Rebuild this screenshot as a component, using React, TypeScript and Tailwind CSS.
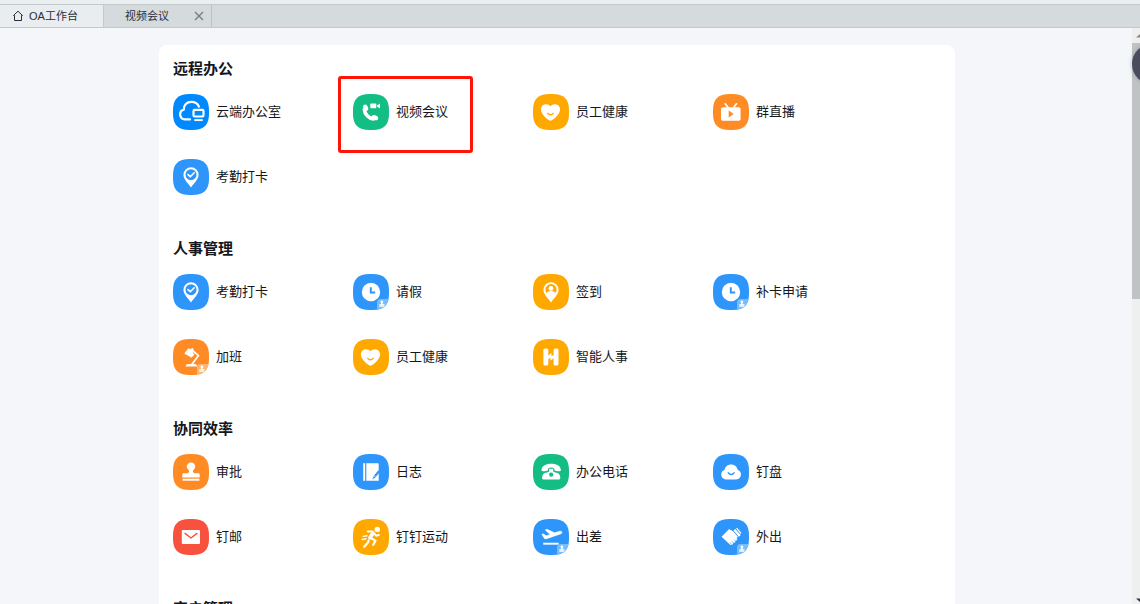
import React from "react";

type Glyph = { color: string; badge?: boolean; art: React.ReactNode };

const BLUE = "#2e96fb";
const AMBER = "#ffa800";
const ORANGE = "#ff8b25";
const GREEN = "#13bd84";
const RED = "#f8513d";

const stroke = {
  fill: "none",
  strokeLinecap: "round" as const,
  strokeLinejoin: "round" as const,
};

const pin =
  "M18 8.2a7.6 7.6 0 0 0-7.6 7.6c0 4.6 4.6 8.2 7.6 12.6 3-4.4 7.6-8 7.6-12.6A7.6 7.6 0 0 0 18 8.2z";

const GLYPHS: Record<string, Glyph> = {
  cloudOffice: {
    color: "#0089ff",
    art: (
      <>
        <path
          {...stroke}
          stroke="#fff"
          strokeWidth="2.2"
          d="M17 25.4h-5.2a5 5 0 0 1-1-9.8C10.500 11 14 7.800 18.300 7.800c3.600 0 6.500 1.800 7.600 4.800"
        />
        <rect x="20.500" y="15.900" width="10" height="6.600" rx="1.200" fill="none" stroke="#fff" strokeWidth="2.200" />
        <path d="M21.300 26.100h8.400" stroke="#fff" strokeWidth="1.900" />
      </>
    ),
  },
  video: {
    color: GREEN,
    art: (
      <>
        <path {...stroke} stroke="#fff" strokeWidth="3.6" d="M11.300 15.500c.4 4.600 4.300 8.800 9.200 9.400" />
        <ellipse cx="12.700" cy="13.700" rx="2.300" ry="3.300" fill="#fff" transform="rotate(-25 12.700 13.700)" />
        <ellipse cx="21.900" cy="23.700" rx="3.400" ry="2.300" fill="#fff" transform="rotate(25 21.900 23.700)" />
        <rect x="17.300" y="9.400" width="6" height="4.900" rx=".8" fill="#fff" />
        <path d="M24 11.400l3-2v5l-3-2z" fill="#fff" />
      </>
    ),
  },
  heart: {
    color: AMBER,
    art: (
      <>
        <path
          fill="#fff"
          d="M17.500 26.800c-1.200 0-9.600-5.600-9.600-11.200 0-3.200 2.300-5.400 5.100-5.400 1.900 0 3.500.7 4.500 2 1-1.300 2.600-2 4.500-2 2.800 0 5.100 2.200 5.100 5.400 0 5.600-8.400 11.200-9.600 11.200z"
        />
        <path {...stroke} stroke={AMBER} strokeWidth="1.4" d="M14.800 19.300c1.400 2 4 2 5.400 0" />
      </>
    ),
  },
  live: {
    color: ORANGE,
    art: (
      <>
        <rect x="8" y="13.200" width="19.600" height="13.600" rx="1.800" fill="#fff" />
        <path {...stroke} stroke="#fff" strokeWidth="1.7" d="M12.200 9.800l2.900 3.700M23.500 9.800l-2.900 3.700" />
        <path d="M15.700 16.500l5 3.500-5 3.500z" fill={ORANGE} />
      </>
    ),
  },
  pinCheck: {
    color: BLUE,
    art: (
      <>
        <path d={pin} fill="#fff" />
        <circle cx="18" cy="15.700" r="5.500" fill={BLUE} />
        <path {...stroke} stroke="#fff" strokeWidth="1.6" d="M15 15.600l2.300 2.100 3.900-3.900" />
      </>
    ),
  },
  clock: {
    color: BLUE,
    badge: true,
    art: (
      <>
        <circle cx="18" cy="18" r="9.200" fill="#fff" />
        <path d="M17.800 13.300v5.200h4.400" stroke={BLUE} strokeWidth="1.9" fill="none" />
      </>
    ),
  },
  pinPerson: {
    color: AMBER,
    art: (
      <>
        <path d={pin} fill="#fff" />
        <circle cx="18" cy="15.700" r="5.600" fill={AMBER} />
        <circle cx="18" cy="14.400" r="2.400" fill="#fff" />
        <path d="M13.300 19.700c.8-2 2.500-2.600 4.700-2.600s3.900.6 4.700 2.600l-4.700 3z" fill="#fff" />
      </>
    ),
  },
  lamp: {
    color: ORANGE,
    badge: true,
    art: (
      <>
        <path d="M11.300 14.400l4.100-5.200 2.100.8 2.200-1.100 1.300 2.400-1.300 1.800 1.600 2.600-3 3-2.600-1.700z" fill="#fff" />
        <path {...stroke} stroke="#fff" strokeWidth="1.7" d="M20.500 12.300l5 4.300-6.500 8.600" />
        <path d="M12.600 27.500c.2-1.700 1.300-2.500 2.900-2.500h5.800c1.700 0 2.800.8 3 2.500z" fill="#fff" />
      </>
    ),
  },
  hr: {
    color: AMBER,
    art: (
      <>
        <rect x="10.400" y="9.600" width="4.900" height="17" rx="1.700" fill="#fff" />
        <rect x="20.600" y="9.600" width="4.900" height="17" rx="1.700" fill="#fff" />
        <path d="M14.500 20.600v-3.500l4-3.200v3.400l3-1.700v3.200l-4 2.600v-2.700z" fill="#fff" />
      </>
    ),
  },
  stamp: {
    color: ORANGE,
    art: (
      <>
        <circle cx="18" cy="12.600" r="4.200" fill="#fff" />
        <path
          fill="#fff"
          d="M16 14.500h4v2.700c0 1.500.8 2.100 2.200 2.100h3.100c.8 0 1.400.6 1.400 1.400v2.800H9.300v-2.800c0-.8.600-1.400 1.400-1.400h3.100c1.400 0 2.200-.6 2.200-2.100z"
        />
        <path d="M9.600 25.700h16.800" stroke="#fff" strokeWidth="2" />
      </>
    ),
  },
  journal: {
    color: BLUE,
    art: (
      <>
        <path d="M11.200 9.200v17.600" stroke="#fff" strokeWidth="1.9" />
        <path d="M13.300 9.200h11.200c.7 0 1.200.5 1.200 1.200v16.400H13.300z" fill="#fff" />
        <path d="M26.200 17l-4.300 5.200" stroke={BLUE} strokeWidth="2.2" />
        <path d="M20.900 21.900l1.800 1.500-3.600 1.900z" fill={BLUE} />
      </>
    ),
  },
  phone: {
    color: GREEN,
    art: (
      <>
        <path
          fill="#fff"
          d="M8.500 16.800c-.4-4.600 4.200-7 9.700-7s10.100 2.400 9.700 7c-1.900.8-4.200.7-6.400-.2.200-2-.6-3.100-3.300-3.100s-3.500 1.100-3.300 3.100c-2.200.9-4.500 1-6.400.2z"
        />
        <path
          fill="#fff"
          d="M16.200 14.800h4v2c0 1 1 1.600 2.300 1.800 3.200.4 4.800 2.200 4.800 5.100 0 1.100-.6 1.800-1.700 1.800H10.800c-1.100 0-1.700-.7-1.700-1.800 0-2.900 1.600-4.700 4.800-5.100 1.300-.2 2.300-.8 2.300-1.800z"
        />
        <circle cx="18.200" cy="20.700" r="2.100" fill={GREEN} />
      </>
    ),
  },
  cloud: {
    color: BLUE,
    art: (
      <>
        <path
          fill="#fff"
          d="M13 25.400a4.900 4.900 0 0 1-1.500-9.500c.6-3.300 3.200-5.500 6.600-5.500s6 2.200 6.600 5.500a4.900 4.900 0 0 1-1.500 9.500z"
        />
        <path {...stroke} stroke={BLUE} strokeWidth="1.6" d="M15.300 18.900c1.500 2.200 4.200 2.200 5.700 0" />
      </>
    ),
  },
  mail: {
    color: RED,
    art: (
      <>
        <rect x="8.800" y="11" width="18.200" height="14" rx="1" fill="#fff" />
        <path {...stroke} stroke={RED} strokeWidth="1.4" d="M12 14.400l6 4.600 6-4.600" />
      </>
    ),
  },
  run: {
    color: AMBER,
    art: (
      <>
        <circle cx="24.300" cy="10.400" r="2.700" fill="#fff" />
        <g {...stroke} stroke="#fff">
          <path strokeWidth="2" d="M14.800 12.400h4.700l3.600 4.300 2.700-.7" />
          <path strokeWidth="3.600" d="M20 14.400l-3.200 4.400" />
          <path strokeWidth="2.200" d="M17.200 18.700l5.300 2.900-2.300 4.200M15.700 21.700l-1.200 2.300-3.300 3.700" />
          <path strokeWidth="1.4" d="M10.300 17.400l3.700-.6M9.200 20.500l3.900-.7" />
        </g>
      </>
    ),
  },
  plane: {
    color: BLUE,
    badge: true,
    art: (
      <>
        <path d="M10.200 24.700h15.500" stroke="#fff" strokeWidth="1.9" />
        <path
          fill="#fff"
          d="M8.800 15.300l1.700-.4 2.600 1.900 4-1.300-4.900-4.600 1.900-.6 7.400 3.500 5.300-1.500c1-.3 1.900.1 2.100.8.200.8-.4 1.500-1.300 1.800L13 19.900c-.8.200-1.400 0-1.800-.7z"
          stroke="#fff"
          strokeWidth=".5"
        />
      </>
    ),
  },
  hand: {
    color: BLUE,
    badge: true,
    art: (
      <>
        <path d="M8.600 17.800l7.500-7.700c1.300 1.300 2.800 1.200 4.100 2.500l4.800 5.200-1.500 1.500 1 1.200-1.800 1.400-.4 1.400-1.900.6-.7 1.500-2.300.6z" fill="#fff" />
        <path d="M20.400 11.600l1.900-1.600 5.400 6-1.700 1.700zM23.100 9.600l1-.8 4.200 4.900-.5 1.200z" fill="#fff" />
        <path {...stroke} stroke={BLUE} strokeWidth=".7" d="M21.300 21l1.700 1.800M19.100 22.500l1.600 1.700M17 23.700l1.500 1.500" />
      </>
    ),
  },
};

const SQUIRCLE =
  "M0 16.500C0 5 5 0 16.500 0h3C31 0 36 5 36 16.500v3C36 31 31 36 19.500 36h-3C5 36 0 31 0 19.500z";
const CORNER = "M24 36v-7.500c0-2.300 1.200-3.500 3.500-3.500H36v11z";

function AppIcon({ name }: { name: string }) {
  const { color, badge, art } = GLYPHS[name];
  const clip = React.useId();
  return (
    <svg viewBox="0 0 36 36" className="size-9 shrink-0" aria-hidden="true">
      <clipPath id={clip}>
        <path d={SQUIRCLE} />
      </clipPath>
      <path d={SQUIRCLE} fill={color} />
      {art}
      {badge && (
        <g clipPath={`url(#${clip})`}>
          <path d={CORNER} fill={color} />
          <path d={CORNER} fill="#fff" opacity=".36" />
          <circle cx="28.900" cy="27.800" r="1.400" fill="#fff" />
          <path d="M28.300 28.500h1.200l.3 1.700h1.700v1.500h-5.200v-1.500H28zM26.300 32.200h5.200v.8h-5.200z" fill="#fff" />
        </g>
      )}
    </svg>
  );
}

type Item = { label: string; icon: string; marked?: boolean };

const SECTIONS: { title: string; items: Item[] }[] = [
  {
    title: "远程办公",
    items: [
      { label: "云端办公室", icon: "cloudOffice" },
      { label: "视频会议", icon: "video", marked: true },
      { label: "员工健康", icon: "heart" },
      { label: "群直播", icon: "live" },
      { label: "考勤打卡", icon: "pinCheck" },
    ],
  },
  {
    title: "人事管理",
    items: [
      { label: "考勤打卡", icon: "pinCheck" },
      { label: "请假", icon: "clock" },
      { label: "签到", icon: "pinPerson" },
      { label: "补卡申请", icon: "clock" },
      { label: "加班", icon: "lamp" },
      { label: "员工健康", icon: "heart" },
      { label: "智能人事", icon: "hr" },
    ],
  },
  {
    title: "协同效率",
    items: [
      { label: "审批", icon: "stamp" },
      { label: "日志", icon: "journal" },
      { label: "办公电话", icon: "phone" },
      { label: "钉盘", icon: "cloud" },
      { label: "钉邮", icon: "mail" },
      { label: "钉钉运动", icon: "run" },
      { label: "出差", icon: "plane" },
      { label: "外出", icon: "hand" },
    ],
  },
  { title: "客户管理", items: [] },
];

function TabBar() {
  return (
    <header className="shrink-0 bg-[#e9eef0] pt-1">
      <nav className="flex h-6 border-y border-[#c3c8cb] bg-[#d5dadd] text-[11px] text-[#2b2f36]">
        <button className="flex items-center gap-[5px] border-r border-[#c3c8cb] bg-[#e9edf0] pr-[25px] pl-3">
          <svg viewBox="0 0 12 12" className="size-3" fill="none" stroke="#2b2f36" aria-hidden="true">
            <path d="M2.500 10.500V5.500H1.500L6 1.200l4.500 4.300h-1v5z" strokeLinejoin="round" />
          </svg>
          OA工作台
        </button>
        <div className="flex items-center border-r border-[#bcc2c5] pr-1.5 pl-[21px]">
          <button className="mr-6">视频会议</button>
          <button aria-label="关闭" className="flex size-3 items-center justify-center">
            <svg viewBox="0 0 10 10" className="size-2.5" stroke="#767c82" strokeWidth="1.4" aria-hidden="true">
              <path d="M1 1l8 8M9 1L1 9" />
            </svg>
          </button>
        </div>
      </nav>
    </header>
  );
}

function ScrollRail() {
  return (
    <div className="relative flex w-2 shrink-0 flex-col bg-[#eeefef]" aria-hidden="true">
      <div className="flex h-[15px] items-center justify-end">
        <svg viewBox="0 0 4 4" className="size-1" fill="#8b8480">
          <path d="M0 3.500L4 0v3.500z" />
        </svg>
      </div>
      <div className="h-64 bg-[#c0c3c3]" />
      <div className="mt-auto flex h-2 items-center justify-end">
        <svg viewBox="0 0 4 4" className="size-1" fill="#34363e">
          <path d="M0 .5h4V4z" />
        </svg>
      </div>
      <div className="absolute top-4 left-0 size-10 rounded-full bg-[#4a4c5e] shadow-[0_0_4px_rgba(70,80,95,0.35)]" />
    </div>
  );
}

export default function App() {
  return (
    <div className="flex h-screen flex-col overflow-hidden bg-[#f4f6fa] font-['Liberation_Sans','Noto_Sans_CJK_SC',sans-serif]">
      <TabBar />
      <div className="flex min-h-0 flex-1">
        <main className="min-w-0 flex-1 overflow-hidden pt-[17px] pr-[18px]">
          <div className="mx-auto max-w-[796px] rounded-lg bg-white px-3.5 pt-3">
            {SECTIONS.map((section) => (
              <section key={section.title} className="pb-[42px]">
                <h2 className="mb-[13px] text-[15px] leading-6 font-bold text-[#15171c]">{section.title}</h2>
                <ul className="grid grid-cols-[repeat(auto-fill,180px)] gap-y-[29px]">
                  {section.items.map((item) => (
                    <li key={item.label} className="relative">
                      <a href="#" className="flex items-center gap-[7px] text-[13px] leading-5 text-[#15171c]">
                        <AppIcon name={item.icon} />
                        {item.label}
                      </a>
                      {item.marked && (
                        <span className="pointer-events-none absolute -top-[18px] -left-[15px] h-[77px] w-[135px] rounded-[3px] border-3 border-[#ff1408]" />
                      )}
                    </li>
                  ))}
                </ul>
              </section>
            ))}
          </div>
        </main>
        <ScrollRail />
      </div>
    </div>
  );
}
